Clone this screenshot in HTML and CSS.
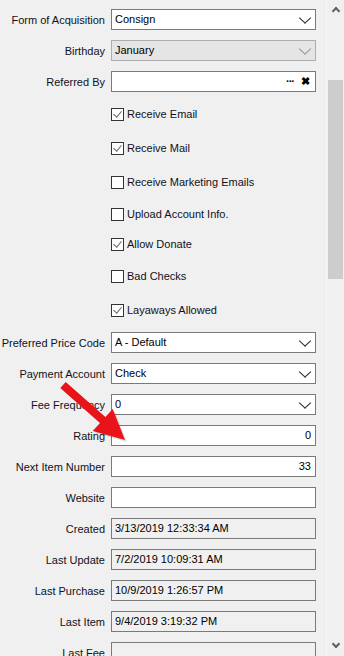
FILE: index.html
```html
<!DOCTYPE html>
<html lang="en">
<head>
  <meta charset="UTF-8" />
  <meta name="viewport" content="width=device-width, initial-scale=1.0"/>
  <title>Customer Details</title>
  <link rel="stylesheet" href="styles.css">
</head>
<body>
  <div class="window">
    <div class="form_area">
      <div class="row">
        <label>Form of Acquisition</label>
        <div class="field combo">Consign<span class="chevron"></span></div>
      </div>
      <div class="row">
        <label>Birthday</label>
        <div class="field combo disabled">January<span class="chevron"></span></div>
      </div>
      <div class="row">
        <label>Referred By</label>
        <div class="field lookup"><span class="dots">&middot;&middot;&middot;</span><span class="clear">&#x2716;</span></div>
      </div>

      <div class="checks">
        <div class="check_row"><span class="box checked"></span>Receive Email</div>
        <div class="check_row"><span class="box checked"></span>Receive Mail</div>
        <div class="check_row"><span class="box"></span>Receive Marketing Emails</div>
        <div class="check_row short"><span class="box"></span>Upload Account Info.</div>
        <div class="check_row short"><span class="box checked"></span>Allow Donate</div>
        <div class="check_row"><span class="box"></span>Bad Checks</div>
        <div class="check_row"><span class="box checked"></span>Layaways Allowed</div>
      </div>

      <div class="row">
        <label>Preferred Price Code</label>
        <div class="field combo">A - Default<span class="chevron"></span></div>
      </div>
      <div class="row">
        <label>Payment Account</label>
        <div class="field combo">Check<span class="chevron"></span></div>
      </div>
      <div class="row">
        <label>Fee Frequency</label>
        <div class="field combo">0<span class="chevron"></span></div>
      </div>
      <div class="row">
        <label>Rating</label>
        <div class="field number">0</div>
      </div>
      <div class="row">
        <label>Next Item Number</label>
        <div class="field number">33</div>
      </div>
      <div class="row">
        <label>Website</label>
        <div class="field"></div>
      </div>
      <div class="row">
        <label>Created</label>
        <div class="field readonly">3/13/2019 12:33:34 AM</div>
      </div>
      <div class="row">
        <label>Last Update</label>
        <div class="field readonly">7/2/2019 10:09:31 AM</div>
      </div>
      <div class="row">
        <label>Last Purchase</label>
        <div class="field readonly">10/9/2019 1:26:57 PM</div>
      </div>
      <div class="row">
        <label>Last Item</label>
        <div class="field readonly">9/4/2019 3:19:32 PM</div>
      </div>
      <div class="row">
        <label>Last Fee</label>
        <div class="field readonly"></div>
      </div>
    </div>

    <div class="scrollbar">
      <span class="scroll_arrow up"></span>
      <div class="thumb"></div>
      <span class="scroll_arrow down"></span>
    </div>

    <!-- annotation arrow drawn over the form -->
    <svg class="pointer" width="80" height="70" viewBox="0 0 80 70">
      <path d="M2.3 7 L7.7 1 L47.4 36 L54.7 27.9 L67 59 L34.7 50.1 L42 42 Z" fill="#0000001f" transform="translate(2,2)"/>
      <path d="M2.3 7 L7.7 1 L47.4 36 L54.7 27.9 L67 59 L34.7 50.1 L42 42 Z" fill="#e8141a"/>
    </svg>
  </div>
</body>
</html>
```

FILE: styles.css
```css
body {
  margin: 0;
  background-color: #f0f0f0;
  font-family: "Liberation Sans", Arial, sans-serif;
  font-size: 11px;
  color: #101020;
}

.window {
  position: relative;
  display: flex;
  width: 344px;
  height: 656px;
  overflow: hidden;
}

.form_area {
  width: 326px;
  padding-top: 9px;
  display: flex;
  flex-direction: column;
}

.row {
  display: flex;
  align-items: center;
  height: 21px;
  margin-bottom: 10px;
  flex-shrink: 0;
}

.row label {
  width: 105px;
  text-align: right;
  margin-right: 6px;
  white-space: nowrap;
}

.field {
  position: relative;
  box-sizing: border-box;
  width: 205px;
  height: 21px;
  line-height: 19px;
  padding: 0 3px;
  background-color: #fff;
  border: 1px solid #7a7a7a;
  color: #000;
  white-space: nowrap;
}

.field.readonly {
  background-color: #f0f0f0;
}

.field.disabled {
  background-color: #e5e5e5;
  border-color: #adadad;
}

.field.number {
  text-align: right;
  padding-right: 4px;
}

.chevron {
  position: absolute;
  right: 6px;
  top: 4px;
  width: 7px;
  height: 7px;
  border-right: 1px solid #333;
  border-bottom: 1px solid #333;
  transform: scaleX(1.1) rotate(45deg);
}

.disabled .chevron {
  border-color: #9a9a9a;
}

.lookup {
  text-align: right;
}

.dots {
  font-weight: bold;
  margin-right: 7px;
  letter-spacing: -1px;
}

.clear {
  font-size: 11px;
  font-weight: bold;
  margin-right: 2px;
}

.checks {
  margin-top: -5px;
  margin-bottom: 5px;
  margin-left: 111px;
  flex-shrink: 0;
}

.check_row {
  display: flex;
  align-items: center;
  height: 34px;
}

.check_row.short {
  height: 30px;
}

.box {
  position: relative;
  box-sizing: border-box;
  width: 13px;
  height: 13px;
  margin-right: 3px;
  background-color: #fff;
  border: 1px solid #333;
}

.box.checked::after {
  content: "";
  position: absolute;
  left: 3px;
  top: 0px;
  width: 4px;
  height: 7px;
  border-right: 1px solid #666;
  border-bottom: 1px solid #666;
  transform: rotate(40deg);
}

.scrollbar {
  width: 17px;
  height: 656px;
  background-color: #f0f0f0;
  border-left: 1px solid #f7f7f7;
  display: flex;
  flex-direction: column;
  align-items: center;
}

.thumb {
  width: 15px;
  height: 199px;
  margin-top: 66px;
  background-color: #cdcdcd;
}

.scroll_arrow {
  width: 4px;
  height: 4px;
  border-left: 2px solid #606060;
  border-top: 2px solid #606060;
}

.scroll_arrow.up {
  margin-top: 8px;
  transform: rotate(45deg);
}

.scroll_arrow.down {
  margin-top: auto;
  margin-bottom: 9px;
  transform: rotate(225deg);
}

.pointer {
  position: absolute;
  left: 58px;
  top: 381px;
}
```
